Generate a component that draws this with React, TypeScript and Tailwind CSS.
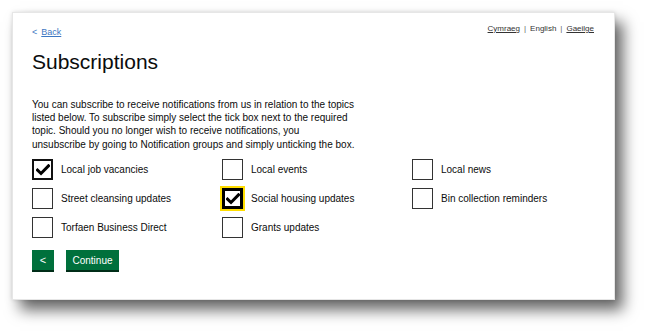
import React from "react";

function Box({ checked, focus }: { checked?: boolean; focus?: boolean }) {
  return (
    <div
      className={
        "w-[21px] h-[21px] shrink-0 bg-white flex items-center justify-center " +
        (focus
          ? "border-[3px] border-black outline outline-2 outline-[#ffdd00]"
          : checked
          ? "border-2 border-[#111]"
          : "border-[1.5px] border-[#333]")
      }
    >
      {checked && (
        <svg width="14" height="12" viewBox="0 0 14 12">
          <path d="M1.5 6.2 L5 9.5 L12.5 1.8" fill="none" stroke="#000" strokeWidth="3" strokeLinecap="square" />
        </svg>
      )}
    </div>
  );
}

function Item({ label, checked, focus }: { label: string; checked?: boolean; focus?: boolean }) {
  return (
    <div className="flex items-center gap-[8px] h-[21px]">
      <Box checked={checked} focus={focus} />
      <span className="text-[10px] text-[#0b0c0c]">{label}</span>
    </div>
  );
}

export default function App() {
  return (
    <div
      className="w-[650px] h-[336px] bg-white overflow-hidden pt-[12px] pl-[12px]"
      style={{ fontFamily: '"Liberation Sans", Arial, sans-serif' }}
    >
      <div className="w-[603px] h-[288px] bg-white border border-[#e6e6e6] shadow-[0_0_4px_rgba(0,0,0,0.12),8px_10px_14px_rgba(0,0,0,0.6)] pl-[19px] pr-[20px] pt-[9px]">
        <div className="flex justify-between items-start">
          <a className="mt-[4px] text-[9px] text-[#3d77c2] flex items-center gap-[4px]">
            <span>&lt;</span>
            <span className="underline">Back</span>
          </a>
          <div className="text-[8px] text-[#333] flex items-center gap-[4px] mt-[1px]">
            <span className="underline">Cymraeg</span>
            <span className="text-[#666]">|</span>
            <span>English</span>
            <span className="text-[#666]">|</span>
            <span className="underline">Gaeilge</span>
          </div>
        </div>
        <h1 className="text-[21px] leading-[26px] text-[#0b0c0c] mt-[9px]">Subscriptions</h1>
        <p className="text-[10px] leading-[13.4px] text-[#0b0c0c] w-[360px] mt-[23px]">
          You can subscribe to receive notifications from us in relation to the topics
          <br />
          listed below. To subscribe simply select the tick box next to the required
          <br />
          topic. Should you no longer wish to receive notifications, you
          <br />
          unsubscribe by going to Notification groups and simply unticking the box.
        </p>
        <div className="grid grid-cols-[190px_190px_190px] gap-y-[8px] mt-[8px]">
          <Item label="Local job vacancies" checked />
          <Item label="Local events" />
          <Item label="Local news" />
          <Item label="Street cleansing updates" />
          <Item label="Social housing updates" checked focus />
          <Item label="Bin collection reminders" />
          <Item label="Torfaen Business Direct" />
          <Item label="Grants updates" />
        </div>
        <div className="flex gap-[12px] mt-[12px]">
          <button className="w-[22px] h-[20px] bg-[#00703c] shadow-[0_2px_0_#002d18] text-white text-[11px] flex items-center justify-center">
            &lt;
          </button>
          <button className="w-[53px] h-[20px] bg-[#00703c] shadow-[0_2px_0_#002d18] text-white text-[10px] flex items-center justify-center">
            Continue
          </button>
        </div>
      </div>
    </div>
  );
}
